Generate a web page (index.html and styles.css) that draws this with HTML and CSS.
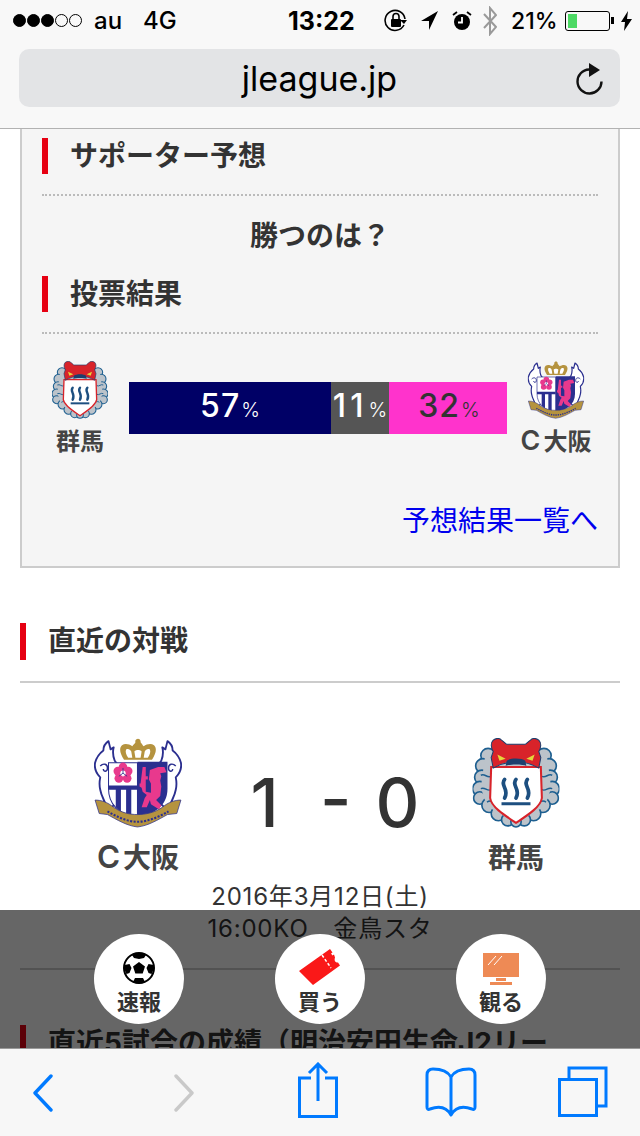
FILE: index.html
```html
<!DOCTYPE html>
<html lang="ja">
<head>
<meta charset="utf-8">
<title>jleague.jp</title>
<link rel="stylesheet" href="styles.css">
</head>
<body>
<svg class="defs" width="0" height="0" aria-hidden="true">
  <defs>
    <symbol id="cerezo" viewBox="0 0 85 87">
      <g fill="#fff" stroke="#2b2f8f" stroke-width="1.800" stroke-linejoin="round">
        <path d="M20 22c-2-5-2-9-1-13l-3 2-2-8c-3 2-5 5-5 9-4 3-7 8-8 12-1 6 2 11 5 14-1 5-1 8 0 12 1 6 4 10 5 14l6 3 6-6V26z"/>
        <path d="M65 22c2-5 2-9 1-13l3 2 2-8c3 2 5 5 5 9 4 3 7 8 8 12 1 6-2 11-5 14 1 5 1 8 0 12-1 6-4 10-5 14l-6 3-6-6V26z"/>
      </g>
      <path d="M6 27c3-3 7-2 7 2s-4 4-4 1M79 27c-3-3-7-2-7 2s4 4 4 1" fill="none" stroke="#2b2f8f" stroke-width="1.400"/>
      <path d="M29 21c-4-6-5-11-2-14 3-2 7-1 10 1 1-2 3-3 3-4-1-3 4-5 5-1 0 1 0 1 0 1 1 1 2 3 3 4 3-2 7-3 10-1 3 3 2 8-2 14z" fill="#b5933f"/>
      <path d="M33 19c-2-3-3-6-2-8 2-1 4 0 5 2l1 6zM40 19l-1-6c1-2 6-2 7 0l-1 6zM52 19c2-3 3-6 2-8-2-1-4 0-5 2l-1 6z" fill="#fff"/>
      <path d="M14 24h28v53C27 74 14 66 14 49z" fill="#fff" stroke="#2b2f8f" stroke-width="1"/>
      <path d="M42 23h29v26c0 17-14 25-29 28z" fill="#2b2f8f"/>
      <path d="M14 46h28v4H14zM21 50v17l5 4V50zM31 50v24l5 2V50z" fill="#2b2f8f"/>
      <g fill="#e8398d"><circle cx="23" cy="32" r="4.200"/><circle cx="33" cy="32" r="4.200"/><circle cx="28" cy="28" r="4.200"/><circle cx="24" cy="39" r="4.200"/><circle cx="32" cy="39" r="4.200"/></g>
      <circle cx="28" cy="34" r="2.600" fill="#fff"/>
      <path d="M28 34v-5M28 34l4 3M28 34l-4 3" stroke="#2b2f8f" stroke-width=".8"/>
      <path d="M47 28h3v9h2v3h-2v12l5 1v-9l-2-4 1-9 8-3h6l2 5-6 1 1 3-1 4 1 6-1 9-4 4 5 5-2 4-8-5-1-4-3 7h-5l3-9 2-3-4-3-1-4-2-1v-3h1z" fill="#e8398d"/>
      <path d="M1 60c6 0 12 2 18 7 7 5 15 7 23 7s17-2 24-7c6-5 12-7 18-7l-4 13-9 1c-9 5-19 11-29 12-10-1-20-7-29-12l-8-1z" fill="#b5933f" stroke="#2b2f8f" stroke-width=".7"/>
      <path d="M13 71c9 5 19 10 29 10s21-5 30-10" fill="none" stroke="#2b2f8f" stroke-width="2" stroke-dasharray="2 1.400"/>
    </symbol>
    <symbol id="thespa" viewBox="0 0 84 87">
      <g fill="#bcc3ca" stroke="#1d5f90" stroke-width="1.600">
        <circle cx="15" cy="17" r="7"/><circle cx="69" cy="17" r="7"/>
        <circle cx="10" cy="27" r="7"/><circle cx="74" cy="27" r="7"/>
        <circle cx="9" cy="38" r="7"/><circle cx="75" cy="38" r="7"/>
        <circle cx="7" cy="49" r="7"/><circle cx="77" cy="49" r="7"/>
        <circle cx="7" cy="58" r="6"/><circle cx="77" cy="58" r="6"/>
        <circle cx="16" cy="65" r="7"/><circle cx="68" cy="65" r="7"/>
        <circle cx="25" cy="73" r="7"/><circle cx="59" cy="73" r="7"/>
        <circle cx="34" cy="79" r="6"/><circle cx="50" cy="79" r="6"/>
        <circle cx="42" cy="81" r="5"/>
      </g>
      <path d="M12 18h60l4 30-6 18-28 16-28-16-6-18z" fill="#bcc3ca"/>
      <path d="M8 36c4-2 6 3 10 1m-10 12c4-2 6 3 10 1m-4 12c4-3 6 1 9 0m54-26c-4-2-6 3-10 1m10 12c-4-2-6 3-10 1m4 12c-4-3-6 1-9 0" fill="none" stroke="#1d5f90" stroke-width="1.400"/>
      <path d="M18 28h48l1 30c-1 9-16 18-25 24-9-6-24-15-25-24z" fill="#fff" stroke="#d8232a" stroke-width="2"/>
      <path d="M20 2c3-2 6-2 8 0 3 2 4 4 5 4h18c1 0 2-2 5-4 2-2 5-2 8 0 3 3 2 8 0 11l2 6-2 10c-7-4-13-6-22-6s-15 2-22 6l-2-10 2-6c-2-3-3-8 0-11z" fill="#d8232a" stroke="#1d3f6e" stroke-width="1"/>
      <path d="M24 16l8 4-6 2zM60 16l-8 4 6 2z" fill="#e4d63a"/>
      <path d="M33 22c3-3 15-3 18 0l1 5c-3-2-17-2-20 0z" fill="#1d3f6e"/>
      <g fill="none" stroke="#1d4f80" stroke-width="3.600" stroke-linecap="round"><path d="M31 40c-5 6 5 9 0 18"/><path d="M42 40c-5 6 5 9 0 18"/><path d="M53 40c-5 6 5 9 0 18"/></g>
      <path d="M28 62h28v3H28z" fill="#1d4f80"/>
    </symbol>
  </defs>
</svg>
<div class="app">
  <header class="browser-top">
    <div class="status">
      <div class="signal">
        <i class="dot on"></i><i class="dot on"></i><i class="dot on"></i><i class="dot"></i><i class="dot"></i>
      </div>
      <span class="carrier">au</span>
      <span class="net">4G</span>
      <span class="time">13:22</span>
      <svg class="ico-lock" width="24" height="26" viewBox="0 0 24 26"><path d="M20 17a10 10 0 1 1 1-6" fill="none" stroke="#000" stroke-width="1.600"/><path d="M16 12h7l-3 4z" fill="#000"/><rect x="7" y="11" width="10" height="8" rx="1"/><path d="M9 11V8.500a3 3 0 0 1 6 0V11" fill="none" stroke="#000" stroke-width="1.600"/></svg>
      <svg class="ico-loc" width="19" height="21" viewBox="0 0 19 21"><path d="M18 1L9 20V11H1z"/></svg>
      <svg class="ico-alarm" width="20" height="22" viewBox="0 0 20 22"><circle cx="10" cy="12" r="8"/><path d="M10 7v5.500H6" stroke="#fff" stroke-width="1.800" fill="none"/><path d="M1 5l4-3M19 5l-4-3" stroke="#000" stroke-width="1.800"/></svg>
      <svg class="ico-bt" width="14" height="30" viewBox="0 0 14 30"><path d="M1 8l12 13-6 7V2l6 7L1 22" fill="none" stroke="#9a9a9a" stroke-width="2"/></svg>
      <span class="pct">21%</span>
      <div class="battery"><div class="battery-fill"></div></div>
      <i class="battery-cap"></i>
      <svg class="ico-bolt" width="11" height="20" viewBox="0 0 11 20"><path d="M7 0L0 11h4l-1 9 8-12H6z"/></svg>
    </div>
    <div class="urlbar">
      <span class="url">jleague.jp</span>
      <svg class="reload" width="30" height="32" viewBox="0 0 30 32"><path d="M14 6.500A12 12 0 1 0 26.500 18.500" fill="none" stroke="#111" stroke-width="2.400"/><path d="M14 0l11 7-11 7z" fill="#111"/></svg>
    </div>
  </header>

  <main class="content">
    <section class="panel">
      <h2 class="panel-heading">サポーター予想</h2>
      <p class="question">勝つのは？</p>
      <h2 class="panel-heading">投票結果</h2>
      <div class="vote">
        <div class="vote-team">
          <svg class="crest-sm" viewBox="0 0 84 87"><use href="#thespa"/></svg>
          <span>群馬</span>
        </div>
        <div class="vote-bar">
          <div class="seg seg-a" style="width:202px">57<small>%</small></div>
          <div class="seg seg-b" style="width:58px">11<small>%</small></div>
          <div class="seg seg-c" style="width:118px">32<small>%</small></div>
        </div>
        <div class="vote-team">
          <svg class="crest-sm" viewBox="0 0 85 87"><use href="#cerezo"/></svg>
          <span><b class="latin">C</b>大阪</span>
        </div>
      </div>
      <a class="more" href="#">予想結果一覧へ</a>
    </section>

    <section class="recent">
      <h2 class="section-heading">直近の対戦</h2>
      <div class="match">
        <div class="match-team">
          <svg class="crest-lg" viewBox="0 0 85 87"><use href="#cerezo"/></svg>
          <span><b class="latin">C</b>大阪</span>
        </div>
        <div class="score"><span class="score-home">1</span> - 0</div>
        <div class="match-team">
          <svg class="crest-lg" viewBox="0 0 84 87"><use href="#thespa"/></svg>
          <span>群馬</span>
        </div>
      </div>
      <p class="match-info">2016年3月12日(土)<br>16:00KO　金鳥スタ</p>
      <h2 class="section-heading last">直近5試合の成績（明治安田生命J2リー<br>グ）</h2>
    </section>

    <nav class="overlay">
      <a class="bubble" href="#">
        <svg class="bubble-icon" width="36" height="36" viewBox="0 0 36 36"><circle cx="18" cy="18" r="15" fill="#fff" stroke="#000" stroke-width="2"/><path d="M18 12l6 4.500-2.300 7h-7.400l-2.300-7z"/><path d="M18 3c-3 0-5 1-7 2l2 3 5 1 5-1 2-3c-2-1-4-2-7-2zM3.500 15c-.5 3 .5 7 2 9l3-1 2-5-2-4zM32.500 15c.5 3-.5 7-2 9l-3-1-2-5 2-4zM12 32l2-4h8l2 4c-4 2-8 2-12 0z"/></svg>
        <span>速報</span>
      </a>
      <a class="bubble" href="#">
        <svg class="bubble-icon" width="44" height="38" viewBox="0 0 44 38"><path d="M1 23L32 1l2.500 3.500-1.500 1 1.500 2 1.500-1 1 3c-1 3 0 5 3 5l2 3-27 19.500z" fill="#fa1818"/><path d="M24 7l9 13" stroke="#fff" stroke-width="1.500" stroke-dasharray="3 2"/></svg>
        <span>買う</span>
      </a>
      <a class="bubble" href="#">
        <svg class="bubble-icon" width="38" height="34" viewBox="0 0 38 34"><path d="M1 1h36v24H1zM14 26h10v3H14zM8 30h22v3H8z" fill="#ee8a55"/><path d="M6 13L14 4M12 13l8-9" stroke="#fff" stroke-width="1" fill="none"/></svg>
        <span>観る</span>
      </a>
    </nav>
  </main>

  <footer class="toolbar">
    <svg class="tb tb-back" width="20" height="38" viewBox="0 0 20 38"><path d="M18 2L2 19l16 17" fill="none" stroke="#007aff" stroke-width="3.400" stroke-linecap="round" stroke-linejoin="round"/></svg>
    <svg class="tb tb-forward" width="20" height="38" viewBox="0 0 20 38"><path d="M2 2l16 17L2 36" fill="none" stroke="#c9c9c9" stroke-width="3.400" stroke-linecap="round" stroke-linejoin="round"/></svg>
    <svg class="tb tb-share" width="40" height="56" viewBox="0 0 40 56" fill="none" stroke="#007aff" stroke-width="3"><path d="M13 16H1.500v38.500h37V16H27"/><path d="M20 39V3M11 11l9-9 9 9"/></svg>
    <svg class="tb tb-book" width="52" height="50" viewBox="0 0 52 50" fill="none" stroke="#007aff" stroke-width="3" stroke-linejoin="round"><path d="M26 10C22 3 14 2 8 2 4 2 2 4 2 8v32c0 2 1 3 3 2 8-3 16-3 21 6 5-9 13-9 21-6 2 1 3 0 3-2V8c0-4-2-6-6-6-6 0-14 1-18 8zM26 10v38"/></svg>
    <svg class="tb tb-tabs" width="50" height="51" viewBox="0 0 50 51" fill="none" stroke="#007aff" stroke-width="3"><path d="M11 12V2h37v38h-9"/><path d="M1.500 13.500h37v36h-37z"/></svg>
  </footer>
</div>
</body>
</html>
```
FILE: styles.css
```css
* { box-sizing: border-box; }
html, body { margin: 0; padding: 0; background: #fff; }
body { font-family: Inter, "Noto Sans CJK JP", sans-serif; color: #333; }
.defs { position: absolute; }
.app { width: 640px; height: 1136px; display: flex; flex-direction: column; overflow: hidden; }

/* browser chrome */
.browser-top { height: 129px; flex: none; background: #f8f8f8; border-bottom: 1px solid #b2b2b2; color: #000; }
.status { height: 49px; display: flex; align-items: center; padding: 0 0 8px 13px; }
.signal { display: flex; gap: 1px; width: 81px; }
.dot { width: 13px; height: 13px; border-radius: 50%; border: 1px solid #000; }
.dot.on { background: #000; }
.carrier { width: 49px; font-size: 24px; font-weight: 500; }
.net { width: 145px; font-size: 24px; font-weight: 500; }
.time { width: 96px; font-size: 25px; font-weight: 700; white-space: nowrap; }
.ico-lock { margin-right: 12px; }
.ico-loc { margin-right: 13px; }
.ico-alarm { margin-right: 11px; }
.ico-bt { margin-right: 14px; }
.pct { width: 54px; font-size: 23px; font-weight: 500; white-space: nowrap; }
.battery { width: 45px; height: 20px; border: 1px solid #000; border-radius: 3px; padding: 2px; }
.battery-fill { width: 9px; height: 100%; background: #4cd964; }
.battery-cap { width: 3px; height: 7px; background: #000; margin: 0 7px 0 1px; }
.urlbar { position: relative; margin: 0 20px 0 19px; height: 58px; border-radius: 10px; background: #e3e4e6; display: flex; align-items: center; justify-content: center; }
.url { font-size: 34px; font-weight: 400; color: #000; }
.reload { position: absolute; right: 15px; top: 14px; }

/* scrolling page */
.content { position: relative; flex: 1; overflow: hidden; }
.panel { margin: 0 20px; padding: 9px 20px 0; height: 439px; background: #f5f5f5; border: 2px solid #ccc; border-top: 0; }
.panel-heading { margin: 0; height: 36px; border-left: 6px solid #e60012; padding-left: 22px; font-size: 28px; line-height: 36px; font-weight: 700; color: #333; position: relative; white-space: nowrap; }
.panel-heading::after { content: ""; position: absolute; left: -6px; right: 0; top: 56px; border-top: 2px dotted #bbb; }
.question { margin: 41px 0 0; height: 61px; text-align: center; font-size: 28px; line-height: 42px; font-weight: 700; }
.vote { display: flex; align-items: flex-start; gap: 11px; margin-top: 49px; }
.vote-team { width: 76px; display: flex; flex-direction: column; align-items: center; gap: 8px; font-size: 24px; font-weight: 700; line-height: 30px; color: #444; white-space: nowrap; }
.crest-sm { width: 58px; height: 58px; }
.latin { margin-right: 3px; font-size: 1.12em; font-weight: 600; line-height: 1; }
.vote-bar { display: flex; flex: none; width: 378px; height: 52px; margin-top: 21px; }
.seg { display: flex; align-items: baseline; justify-content: center; font-size: 32px; line-height: 48px; font-weight: 500; letter-spacing: 1px; white-space: nowrap; }
.seg small { font-size: 20px; font-weight: 300; letter-spacing: 0; margin-left: 1px; }
.seg-a { background: #000066; color: #fff; }
.seg-b { background: #555; color: #fff; letter-spacing: 4px; }
.seg-c { background: #ff33cc; color: #333; padding-left: 2px; }
.more { display: block; margin-top: 44px; text-align: right; font-size: 28px; line-height: 40px; color: #0000ee; text-decoration: none; }

.recent { padding: 0 20px; }
.section-heading { margin: 55px 0 0; height: 37px; border-left: 6px solid #e60012; padding-left: 22px; font-size: 28px; line-height: 36px; font-weight: 700; color: #333; white-space: nowrap; }
.match { margin-top: 21px; height: 200px; padding: 55px 0 0 14px; border-top: 2px solid #ccc; display: flex; justify-content: center; }
.match-team { width: 120px; display: flex; flex-direction: column; align-items: center; gap: 10px; font-size: 28px; font-weight: 700; line-height: 40px; color: #444; white-space: nowrap; }
.crest-lg { width: 88px; height: 90px; flex: none; }
.score { width: 258px; text-align: center; font-size: 68px; font-weight: 500; line-height: 90px; margin-top: 19px; white-space: pre; padding-left: 16px; word-spacing: 6px; }
.score-home { margin-right: 17px; }
.match-info { margin: 0; padding-bottom: 23px; border-bottom: 2px solid #ccc; text-align: center; font-size: 24px; line-height: 32px; letter-spacing: .8px; color: #333; }
.section-heading.last { margin-top: 55px; }

/* floating shortcuts */
.overlay { position: absolute; left: 0; right: 0; bottom: 0; height: 138px; background: rgba(0, 0, 0, .6); display: flex; justify-content: center; gap: 91px; padding-top: 24px; }
.bubble { width: 90px; height: 90px; border-radius: 50%; background: #fff; display: flex; flex-direction: column; align-items: center; justify-content: flex-end; padding-bottom: 8px; font-size: 22px; font-weight: 700; line-height: 28px; color: #333; text-decoration: none; }
.bubble-icon { margin-bottom: 2px; }

/* toolbar */
.toolbar { height: 88px; flex: none; background: #f7f7f7; border-top: 1px solid #9a9a9a; display: flex; align-items: flex-start; padding-left: 33px; }
.tb { flex: none; }
.tb-back { margin-top: 25px; }
.tb-forward { margin-left: 121px; margin-top: 25px; }
.tb-share { margin-left: 104px; margin-top: 13px; }
.tb-book { margin-left: 87px; margin-top: 18px; }
.tb-tabs { margin-left: 81px; margin-top: 17px; }
```
